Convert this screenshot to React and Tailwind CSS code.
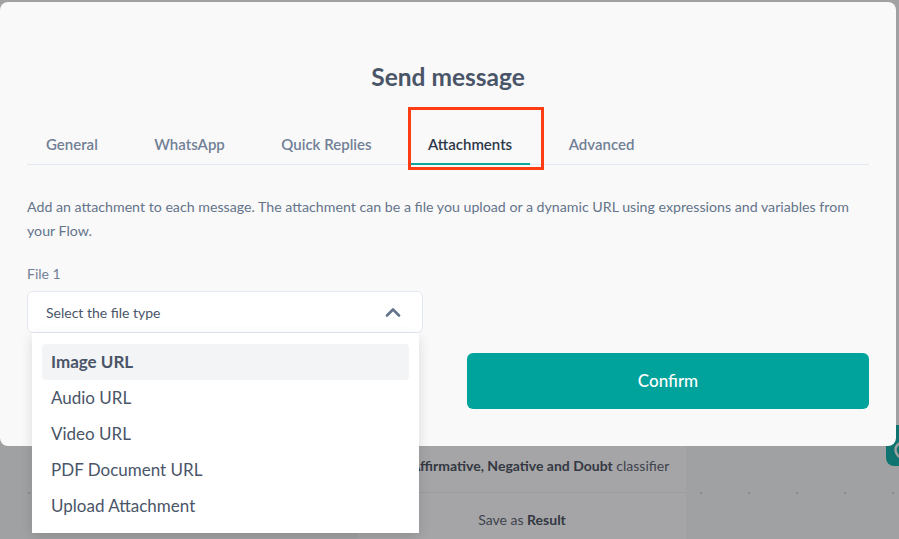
import React from 'react';

const TABS = ['General', 'WhatsApp', 'Quick Replies', 'Attachments', 'Advanced'];
const FILE_TYPES = ['Image URL', 'Audio URL', 'Video URL', 'PDF Document URL', 'Upload Attachment'];

function ChevronUp() {
  return (
    <svg width="16" height="10" viewBox="0 0 16 10" fill="none">
      <path d="M2 8.5L8 2.5L14 8.5" stroke="#64748b" strokeWidth="2.6" strokeLinecap="round" strokeLinejoin="round" />
    </svg>
  );
}

export default function App() {
  const activeTab = 'Attachments';

  return (
    <div
      className="relative w-[899px] h-[539px] overflow-hidden"
      style={{ fontFamily: 'Lato, "Open Sans", sans-serif' }}
    >
      {/* Flow canvas behind the modal */}
      <div className="absolute inset-0 bg-[#f3f4f7] bg-[radial-gradient(circle,#d2d4da_1.5px,transparent_1.5px)] bg-[size:48px_48px] bg-[position:5px_37px]" />

      {/* Node card on the canvas */}
      <div className="absolute left-[358px] top-[438px] w-[328px] h-[120px] bg-[#fbfbfd] text-[14px] text-[#5f6676]">
        <div className="h-[54px] flex items-center justify-center pl-[36px]">
          <span>
            <b className="font-bold text-[#4f5666]">Affirmative, Negative and Doubt</b> classifier
          </span>
        </div>
        <div className="h-[54px] flex items-center justify-center border-t border-[#eceef2]">
          <span>
            Save as <b className="font-bold text-[#4f5666]">Result</b>
          </span>
        </div>
      </div>

      {/* Floating help button */}
      <div className="absolute left-[886px] top-[425px] w-[48px] h-[41px] rounded-lg bg-[#17b0aa]">
        <svg className="absolute left-[7px] top-[15px]" width="20" height="20" viewBox="0 0 20 20" fill="none">
          <circle cx="10" cy="10" r="7.5" stroke="#f4f4f4" strokeWidth="2.4" />
        </svg>
      </div>

      {/* Overlay */}
      <div className="absolute inset-0 bg-black/[0.34]" />

      {/* Modal */}
      <div className="absolute left-0 top-[2px] w-[896px] h-[444px] rounded-lg bg-[#f9f9f9] px-[27px] pt-[59px]">
        <h2 className="text-[24.5px] leading-8 font-bold text-[#4a5568] text-center">Send message</h2>

        <div className="mt-[29px] flex gap-[20.5px] border-b border-[#e2e8f0] pl-px">
          {TABS.map((tab) => (
            <div
              key={tab}
              className={
                tab === activeTab
                  ? 'px-[18px] pt-[12px] pb-[9px] text-[15px] leading-5 font-semibold -mb-px border-b-2 border-[#0ea59d] text-[#2d3748]'
                  : 'px-[18px] pt-[12px] pb-[9px] text-[15px] leading-5 font-semibold -mb-px border-b-2 border-transparent text-[#718096]'
              }
            >
              {tab}
            </div>
          ))}
        </div>

        <p className="mt-[30px] max-w-[832px] text-[14.2px] leading-6 text-[#64748b]">
          Add an attachment to each message. The attachment can be a file you upload or a dynamic URL using expressions and variables from your Flow.
        </p>

        <div className="mt-[21px] text-[14px] leading-5 text-[#718096]">File 1</div>

        <div className="relative mt-[7px] w-[396px] h-[42px] rounded-md border border-[#e2e8f0] bg-white flex items-center justify-between pl-[18px] pr-[21px]">
          <span className="text-[14px] text-[#4a5568]">Select the file type</span>
          <ChevronUp />

          <div className="absolute left-[4px] top-[41px] w-[387px] bg-white pt-[11px] pb-[9px] px-[10px] shadow-[0_4px_12px_rgba(0,0,0,0.12)] z-10">
            {FILE_TYPES.map((type, i) => (
              <div
                key={type}
                className={
                  i === 0
                    ? 'h-9 flex items-center px-[9px] rounded bg-[#f3f4f6] text-[17px] font-bold text-[#4a5568]'
                    : 'h-9 flex items-center px-[9px] text-[17px] text-[#4a5568]'
                }
              >
                {type}
              </div>
            ))}
          </div>
        </div>

        <div className="mt-5 flex justify-end">
          <button className="w-[402px] h-[56px] rounded-md bg-[#00a39b] text-white text-[17px] font-medium">
            Confirm
          </button>
        </div>
      </div>

      {/* Annotation boxes */}
      <div className="absolute left-[408px] top-[107px] w-[136px] h-[63px] border-[3px] border-[#ff3d12]" />
      <div className="absolute left-[37px] top-[333px] w-[374px] h-[153px] border-[3px] border-[#ff3d12]" />
    </div>
  );
}
